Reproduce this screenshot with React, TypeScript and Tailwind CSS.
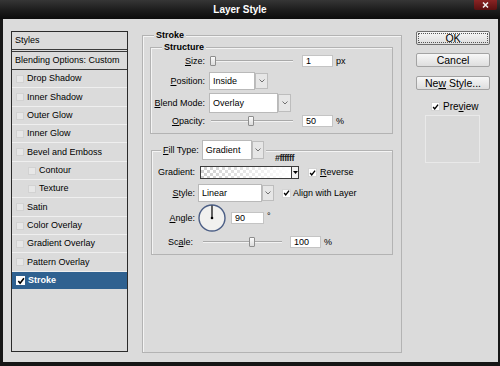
import React from "react";

function Chevron() {
  return (
    <svg width="6" height="4" viewBox="0 0 6 4">
      <path d="M0.5 0.5 L3 3 L5.5 0.5" fill="none" stroke="#707070" strokeWidth="1" />
    </svg>
  );
}

function Check({ size = 9 }: { size?: number }) {
  return (
    <svg width={size} height={size} viewBox="0 0 9 9">
      <path d="M1.5 4.5 L3.5 7 L7.8 1.5" fill="none" stroke="#000" strokeWidth="1.8" />
    </svg>
  );
}

function Select({ text, w, bw, h }: { text: string; w: string; bw: string; h: string }) {
  return (
    <div className={`flex items-center ${h}`}>
      <div className={`${w} h-full bg-white border border-[#b9b9b9] flex items-center pl-[3px]`}>{text}</div>
      <div className={`${bw} h-[88%] bg-[#e6e6e6] border border-[#bdbdbd] flex items-center justify-center`}>
        <Chevron />
      </div>
    </div>
  );
}

function Input({ text, w }: { text: string; w: string }) {
  return (
    <div className={`${w} h-[12px] bg-white border border-[#c4c4c4] flex items-center pl-[3px] leading-none`}>{text}</div>
  );
}

function Slider({ w, thumb }: { w: string; thumb: string }) {
  return (
    <div className={`relative ${w} h-full flex items-center`}>
      <div className="w-full h-[2px] border-t border-[#a9a9a9] border-b border-b-[#f2f2f2]" />
      <div className={`absolute ${thumb} top-[1px] w-[6px] h-[10px] bg-gradient-to-b from-[#fbfbfb] to-[#dcdcdc] border border-[#8d8d8d] rounded-[1px]`} />
    </div>
  );
}

const rows: { label: string; indent?: boolean; h: string; sel?: boolean }[] = [
  { label: "Drop Shadow", h: "h-[18px]" },
  { label: "Inner Shadow", h: "h-[19px]" },
  { label: "Outer Glow", h: "h-[18px]" },
  { label: "Inner Glow", h: "h-[18px]" },
  { label: "Bevel and Emboss", h: "h-[19px]" },
  { label: "Contour", indent: true, h: "h-[18px]" },
  { label: "Texture", indent: true, h: "h-[18px]" },
  { label: "Satin", h: "h-[19px]" },
  { label: "Color Overlay", h: "h-[18px]" },
  { label: "Gradient Overlay", h: "h-[18px]" },
  { label: "Pattern Overlay", h: "h-[19px]" },
  { label: "Stroke", h: "h-[17px]", sel: true },
];

function Btn({ children, focus }: { children: React.ReactNode; focus?: boolean }) {
  return (
    <div
      className={`w-[74px] h-[14px] rounded-[2px] border ${focus ? "border-[#6f6f6f]" : "border-[#a3a3a3]"} bg-gradient-to-b from-[#f7f7f7] to-[#dedede] flex items-center justify-center text-[10.5px] p-[1px]`}
    >
      <div className={`w-full h-full flex items-center justify-center ${focus ? "border border-dotted border-[#555]" : ""}`}>
        <span>{children}</span>
      </div>
    </div>
  );
}

export default function App() {
  return (
    <div className="w-[500px] h-[366px] bg-[#161616] flex flex-col overflow-hidden font-['Liberation_Sans',Arial,sans-serif] text-[9px] text-black leading-none">
      {/* Title bar */}
      <div className="relative h-[19px] bg-gradient-to-b from-[#363636] via-[#1e1e1e] to-[#0c0c0c] flex items-center justify-center pr-[20px]">
        <span className="text-white font-bold text-[10px]">Layer Style</span>
        <div className="absolute top-0 right-[3px] w-[23px] h-[10px] bg-gradient-to-b from-[#8a2424] to-[#5a1010] rounded-b-[2px] flex items-center justify-center">
          <svg width="7" height="6" viewBox="0 0 7 6">
            <path d="M1 0.5 L6 5.5 M6 0.5 L1 5.5" stroke="#f2f2f2" strokeWidth="1.5" />
          </svg>
        </div>
      </div>

      {/* Body */}
      <div className="ml-[3px] mr-[2px] h-[343px] bg-[#dbdbdb] flex pl-[8px] pt-[12px]">
        {/* Left list */}
        <div className="w-[117px] h-[321px] border border-[#2b2b2b] flex flex-col">
          <div className="h-[18px] border-b border-[#3a3a3a] flex items-center pl-[3px]">Styles</div>
          <div className="mt-[1px] h-[19px] border-t border-b border-[#3a3a3a] flex items-center pl-[3px]">
            Blending Options: Custom
          </div>
          {rows.map((r) => (
            <div
              key={r.label}
              className={`${r.h} flex items-center ${r.indent ? "pl-[16px]" : "pl-[4px]"} ${
                r.sel ? "bg-[#2f6190] text-white font-bold" : "border-b border-[#efefef]"
              }`}
            >
              {r.sel ? (
                <div className="w-[9px] h-[9px] bg-white flex items-center justify-center">
                  <Check size={8} />
                </div>
              ) : (
                <div className="w-[8px] h-[8px] bg-[#e7e7e7] border border-[#d2d2d2]" />
              )}
              <span className="ml-[3px]">{r.label}</span>
            </div>
          ))}
        </div>

        {/* Main group */}
        <div className="ml-[14px] mt-[4px] w-[260px] h-[318px] relative border border-[#b3b3b3] shadow-[inset_1px_1px_0_#f4f4f4]">
          <div className="absolute left-[11px] top-[-5px] bg-[#dbdbdb] px-[2px] font-bold">Stroke</div>

          {/* Structure */}
          <div className="ml-[7px] mt-[11px] w-[243px] h-[87px] relative border border-[#b3b3b3] shadow-[inset_1px_1px_0_#f4f4f4] pt-[7px] flex flex-col">
            <div className="absolute left-[11px] top-[-5px] bg-[#dbdbdb] px-[2px] font-bold">Structure</div>
            <div className="flex items-center h-[12px]">
              <div className="w-[54px] text-right"><span className="underline">S</span>ize:</div>
              <div className="ml-[5px] h-full flex"><Slider w="w-[83px]" thumb="left-0" /></div>
              <div className="ml-[9px]"><Input text="1" w="w-[31px]" /></div>
              <span className="ml-[3px]">px</span>
            </div>
            <div className="flex items-center h-[18px] mt-[5px]">
              <div className="w-[54px] text-right"><span className="underline">P</span>osition:</div>
              <div className="ml-[4px]"><Select text="Inside" w="w-[46px]" bw="w-[13px]" h="h-[18px]" /></div>
            </div>
            <div className="flex items-center h-[20px] mt-[3px]">
              <div className="w-[54px] text-right"><span className="underline">B</span>lend Mode:</div>
              <div className="ml-[4px]"><Select text="Overlay" w="w-[69px]" bw="w-[13px]" h="h-[20px]" /></div>
            </div>
            <div className="flex items-center h-[12px] mt-[2px]">
              <div className="w-[54px] text-right"><span className="underline">O</span>pacity:</div>
              <div className="ml-[6px] h-full flex"><Slider w="w-[82px]" thumb="left-[37px]" /></div>
              <div className="ml-[9px]"><Input text="50" w="w-[31px]" /></div>
              <span className="ml-[3px]">%</span>
            </div>
          </div>

          {/* Fill type */}
          <div className="ml-[8px] mt-[16px] w-[242px] h-[105px] relative border border-[#b3b3b3] shadow-[inset_1px_1px_0_#f4f4f4] flex flex-col">
            <div className="absolute left-[9px] top-[-11px] bg-[#dbdbdb] px-[2px] flex items-center">
              <span><span className="underline">F</span>ill Type:</span>
              <div className="ml-[3px]"><Select text="Gradient" w="w-[50px]" bw="w-[12px]" h="h-[20px]" /></div>
            </div>
            <div className="mt-[2px] h-[10px] pl-[123px] text-[9px] font-bold tracking-[-0.6px] text-[#1a1a1a] flex items-end">#ffffff</div>
            <div className="mt-[3px] h-[13px] flex items-center">
              <div className="w-[43px] text-right">Gradient:</div>
              <div className="ml-[5px] w-[92px] h-[13px] border border-[#3c3c3c] bg-[repeating-conic-gradient(#cfcfcf_0%_25%,#ffffff_0%_50%)] bg-[length:6px_6px]">
                <div className="w-full h-full bg-gradient-to-r from-transparent to-white" />
              </div>
              <div className="w-[7px] h-[13px] border border-l-0 border-[#3c3c3c] bg-[#f2f2f2] flex items-center justify-center">
                <svg width="5" height="3" viewBox="0 0 5 3"><path d="M0 0 L5 0 L2.5 3 Z" fill="#000" /></svg>
              </div>
              <div className="ml-[9px] w-[9px] h-[9px] bg-white border border-[#d4d4d4] flex items-center justify-center"><Check size={8} /></div>
              <span className="ml-[3px]"><span className="underline">R</span>everse</span>
            </div>
            <div className="mt-[5px] h-[18px] flex items-center">
              <div className="w-[43px] text-right"><span className="underline">S</span>tyle:</div>
              <div className="ml-[3px]"><Select text="Linear" w="w-[64px]" bw="w-[12px]" h="h-[18px]" /></div>
              <div className="ml-[8px] w-[9px] h-[9px] bg-white border border-[#d4d4d4] flex items-center justify-center"><Check size={8} /></div>
              <span className="ml-[2px]">Align with Layer</span>
            </div>
            <div className="mt-[2px] h-[28px] flex items-center">
              <div className="w-[43px] text-right"><span className="underline">A</span>ngle:</div>
              <div className="ml-[3px] w-[28px] h-[28px]">
                <svg width="28" height="28" viewBox="0 0 28 28">
                  <circle cx="14" cy="14" r="13" fill="#f1f1ef" stroke="#4c5f86" strokeWidth="1.4" />
                  <line x1="14" y1="14" x2="14" y2="1.5" stroke="#000" strokeWidth="1.2" />
                  <circle cx="14" cy="14" r="1.3" fill="#000" />
                </svg>
              </div>
              <div className="ml-[5px]"><Input text="90" w="w-[33px]" /></div>
              <span className="ml-[3px] self-start mt-[8px]">°</span>
            </div>
            <div className="mt-[4px] h-[12px] flex items-center">
              <div className="w-[41px] text-right">Sc<span className="underline">a</span>le:</div>
              <div className="ml-[10px] h-full flex"><Slider w="w-[79px]" thumb="left-[46px]" /></div>
              <div className="ml-[8px]"><Input text="100" w="w-[31px]" /></div>
              <span className="ml-[3px]">%</span>
            </div>
          </div>
        </div>

        {/* Right column */}
        <div className="ml-[14px] flex flex-col">
          <Btn focus>OK</Btn>
          <div className="mt-[8px]"><Btn>Cancel</Btn></div>
          <div className="mt-[9px]"><Btn>Ne<span className="underline">w</span> Style...</Btn></div>
          <div className="mt-[12px] h-[9px] flex items-center ml-[15px] text-[10px]">
            <div className="w-[9px] h-[9px] bg-white border border-[#d4d4d4] flex items-center justify-center"><Check size={8} /></div>
            <span className="ml-[3px]">Pre<span className="underline">v</span>iew</span>
          </div>
          <div className="mt-[4px] ml-[9px] w-[55px] h-[48px] border border-[#e9e9e9] bg-[#d9d9d9]" />
        </div>
      </div>
      <div className="flex-1" />
    </div>
  );
}
